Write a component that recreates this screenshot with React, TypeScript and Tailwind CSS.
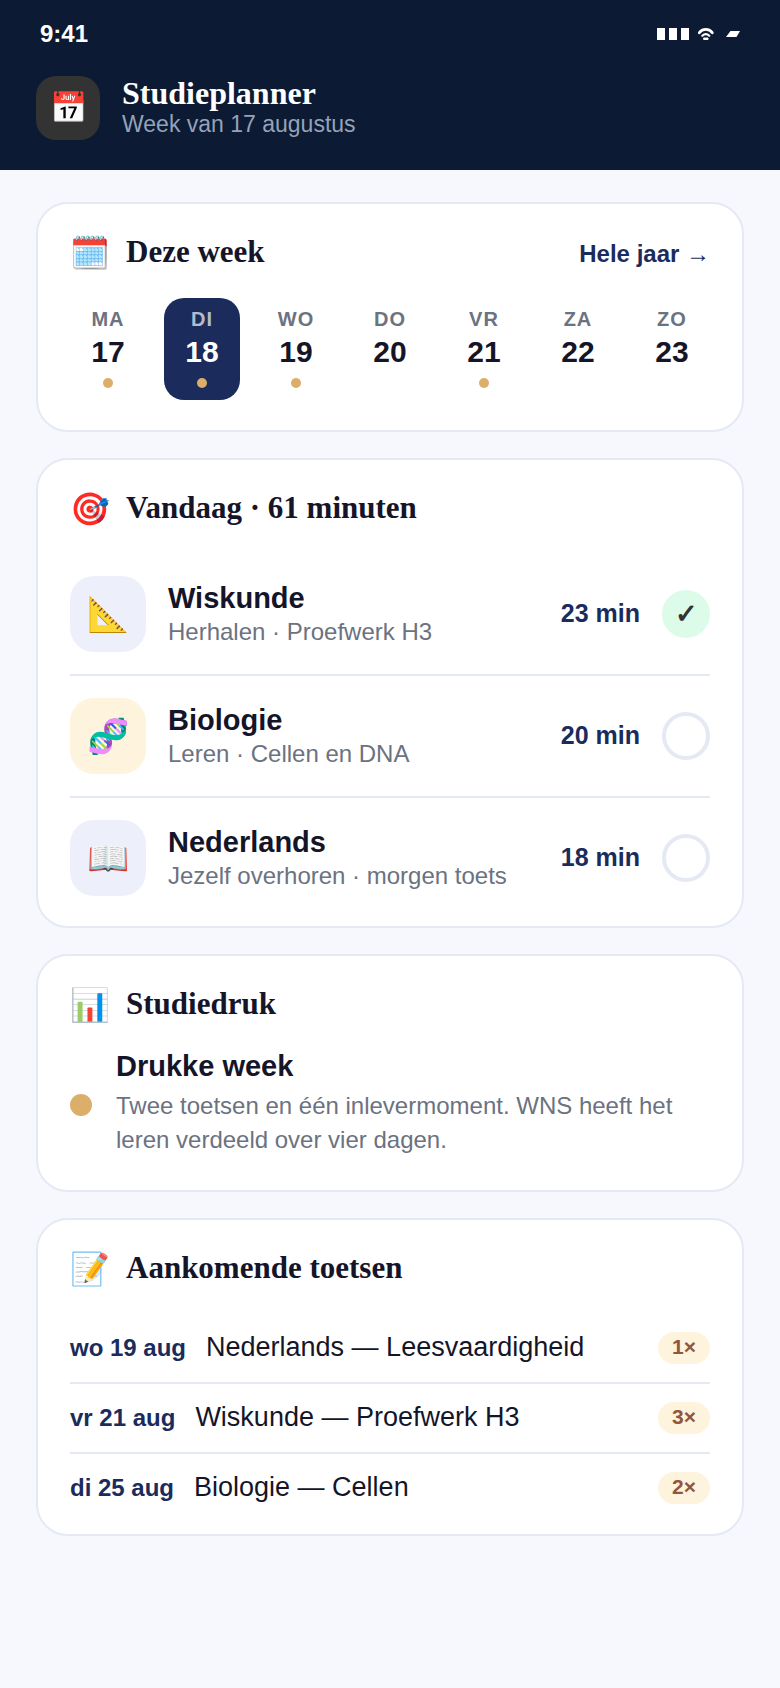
import { useState } from "react";
import type { ReactNode } from "react";
import clsx from "clsx";

interface Day {
  label: string;
  date: number;
  busy?: boolean;
}

interface Task {
  id: string;
  icon: string;
  subject: string;
  detail: string;
  minutes: number;
  highlight?: boolean;
}

const days: Day[] = [
  { label: "MA", date: 17, busy: true },
  { label: "DI", date: 18, busy: true },
  { label: "WO", date: 19, busy: true },
  { label: "DO", date: 20 },
  { label: "VR", date: 21, busy: true },
  { label: "ZA", date: 22 },
  { label: "ZO", date: 23 },
];

const tasks: Task[] = [
  { id: "wis", icon: "📐", subject: "Wiskunde", detail: "Herhalen · Proefwerk H3", minutes: 23 },
  { id: "bio", icon: "🧬", subject: "Biologie", detail: "Leren · Cellen en DNA", minutes: 20, highlight: true },
  { id: "ned", icon: "📖", subject: "Nederlands", detail: "Jezelf overhoren · morgen toets", minutes: 18 },
];

const tests = [
  { date: "wo 19 aug", name: "Nederlands — Leesvaardigheid", sessions: 1 },
  { date: "vr 21 aug", name: "Wiskunde — Proefwerk H3", sessions: 3 },
  { date: "di 25 aug", name: "Biologie — Cellen", sessions: 2 },
];

function StatusIcons() {
  return (
    <svg width="84" height="12" viewBox="0 0 84 12" fill="white" aria-hidden="true">
      <path d="M1 0h8v12H1zM13 0h8v12h-8zM25 0h8v12h-8z" />
      <g fill="none" stroke="white" strokeLinecap="round">
        <path d="M43.300 4.800Q45.500 1.400 49.800 1.400T56.300 4.800" strokeWidth="2.800" />
        <path d="M46.300 7.700Q49.800 4.500 53.300 7.700" strokeWidth="2.200" />
        <path d="M48.300 10.700h3" strokeWidth="2.600" />
      </g>
      <path d="M74.500 3H84l-3.500 6H70z" />
    </svg>
  );
}

function Card({
  icon,
  title,
  action,
  children,
}: {
  icon: string;
  title: string;
  action?: ReactNode;
  children: ReactNode;
}) {
  return (
    <section className="rounded-[32px] border-2 border-[#e5e9f3] bg-white px-8 py-[30px]">
      <div className="mb-7 flex h-9 items-center justify-between">
        <div className="flex items-center gap-4">
          <span className="pt-0.5 text-[32px] leading-9" aria-hidden="true">
            {icon}
          </span>
          <h2 className="font-['Liberation_Serif',serif] text-[31px] leading-9 font-bold">
            {title}
          </h2>
        </div>
        {action}
      </div>
      {children}
    </section>
  );
}

export default function App() {
  const [selected, setSelected] = useState(18);
  const [done, setDone] = useState<string[]>(["wis"]);

  const toggle = (id: string) => {
    setDone((prev) =>
      prev.includes(id) ? prev.filter((d) => d !== id) : [...prev, id]
    );
  };

  return (
    <div className="min-h-screen bg-[#f7f8fd] font-['Liberation_Sans',sans-serif] text-[#15152a]">
      {/* Header */}
      <header className="bg-[#0c1a33] px-9 pt-5 pb-[30px] text-white">
        <div className="mb-7 flex items-center justify-between px-1">
          <span className="text-2xl leading-7 font-bold">9:41</span>
          <StatusIcons />
        </div>
        <div className="flex items-center gap-[22px]">
          <div className="flex size-16 items-center justify-center rounded-[20px] bg-[#333333] text-[30px] leading-9">
            📅
          </div>
          <div>
            <h1 className="font-['Liberation_Serif',serif] text-[32px] leading-8 font-bold">
              Studieplanner
            </h1>
            <p className="text-[23px] leading-[30px] text-[#94a3b8]">
              Week van 17 augustus
            </p>
          </div>
        </div>
      </header>

      <main className="flex flex-col gap-[26px] px-9 py-8">
        {/* Week */}
        <Card
          icon="🗓️"
          title="Deze week"
          action={
            <a href="#jaar" className="pt-1 text-2xl leading-7 font-bold text-[#1b2c5c]">
              Hele jaar →
            </a>
          }
        >
          <div className="grid grid-cols-7 gap-[18px]">
            {days.map((day) => {
              const active = day.date === selected;
              return (
                <button
                  key={day.date}
                  type="button"
                  aria-pressed={active}
                  onClick={() => setSelected(day.date)}
                  className={clsx(
                    "flex flex-col items-center rounded-[20px] pt-2.5 pb-3 font-bold",
                    active && "bg-[#1b2c5c] text-white"
                  )}
                >
                  <span
                    className={clsx(
                      "text-xl leading-[22px] tracking-[1px]",
                      active ? "text-[#b4bccb]" : "text-[#6b7280]"
                    )}
                  >
                    {day.label}
                  </span>
                  <span className="mt-1 text-3xl leading-9">{day.date}</span>
                  <span
                    className={clsx(
                      "mt-2 size-2.5 rounded-full",
                      day.busy && "bg-[#dbae69]"
                    )}
                  />
                </button>
              );
            })}
          </div>
        </Card>

        {/* Today */}
        <Card icon="🎯" title="Vandaag · 61 minuten">
          <ul>
            {tasks.map((task) => {
              const checked = done.includes(task.id);
              return (
                <li
                  key={task.id}
                  className="flex items-center gap-[22px] border-b-2 border-[#e5e9f3] py-[22px] last:border-b-0 last:pb-0"
                >
                  <div
                    className={clsx(
                      "flex size-[76px] shrink-0 items-center justify-center rounded-[24px] text-[34px] leading-10",
                      task.highlight ? "bg-[#fef3dc]" : "bg-[#edf0fa]"
                    )}
                  >
                    {task.icon}
                  </div>
                  <div className="min-w-0 flex-1">
                    <h3 className="text-[29px] leading-9 font-bold">{task.subject}</h3>
                    <p className="text-2xl leading-8 text-[#6b7280]">{task.detail}</p>
                  </div>
                  <span className="pb-0.5 text-[25px] leading-8 font-bold text-[#1b2c5c]">
                    {task.minutes} min
                  </span>
                  <label className="relative block size-12 shrink-0">
                    <input
                      type="checkbox"
                      aria-label={task.subject}
                      checked={checked}
                      onChange={() => toggle(task.id)}
                      className="block size-12 appearance-none rounded-full border-4 border-[#e5e9f3] checked:border-[#dcfce9] checked:bg-[#dcfce9]"
                    />
                    {checked && (
                      <span className="pointer-events-none absolute inset-0 flex items-center justify-center text-[27px] leading-8 font-bold text-[#333333]">
                        ✓
                      </span>
                    )}
                  </label>
                </li>
              );
            })}
          </ul>
        </Card>

        {/* Workload */}
        <Card icon="📊" title="Studiedruk">
          <div className="flex items-center gap-6">
            <span className="size-[22px] shrink-0 rounded-full bg-[#dbae69]" />
            <div className="pb-[3px]">
              <h3 className="text-[29px] leading-8 font-bold">Drukke week</h3>
              <p className="mt-[7px] text-2xl leading-[34px] text-[#6b7280]">
                Twee toetsen en één inlevermoment. WNS heeft het leren verdeeld
                over vier dagen.
              </p>
            </div>
          </div>
        </Card>

        {/* Upcoming tests */}
        <Card icon="📝" title="Aankomende toetsen">
          <ul>
            {tests.map((test) => (
              <li
                key={test.name}
                className="flex items-center gap-5 border-b-2 border-[#e5e9f3] py-[18px] last:border-b-0 last:pb-0"
              >
                <div className="flex h-8 flex-1 items-baseline gap-5">
                  <span className="text-2xl leading-8 font-bold text-[#1b2c5c]">
                    {test.date}
                  </span>
                  <span className="text-[27px] leading-[30px]">{test.name}</span>
                </div>
                <span className="rounded-full bg-[#fef3dc] px-3.5 pt-[3px] pb-[5px] text-[21px] leading-6 font-bold text-[#92573a]">
                  {test.sessions}×
                </span>
              </li>
            ))}
          </ul>
        </Card>
      </main>
    </div>
  );
}
